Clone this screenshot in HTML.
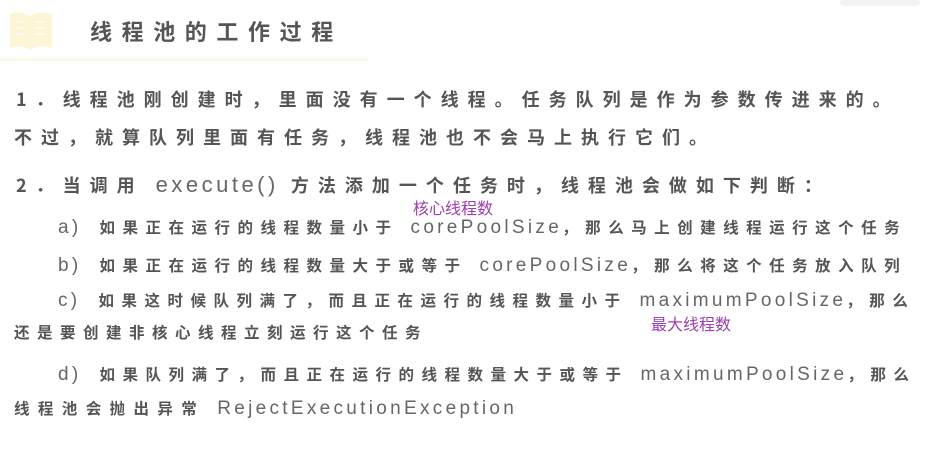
<!DOCTYPE html>
<html><head><meta charset="utf-8"><style>
html,body{margin:0;padding:0;background:#fff;width:931px;height:460px;overflow:hidden;position:relative}
.ln{position:absolute;white-space:nowrap;color:#555;font-family:"Liberation Sans","Noto Sans CJK SC",sans-serif;line-height:1}
.c{font-family:"Noto Sans CJK SC",sans-serif;font-weight:700}
.big .c{font-size:18px;letter-spacing:9px}
.sm .c{font-size:15.5px;letter-spacing:7.5px}
.l{font-family:"Liberation Sans",sans-serif;color:#666;font-size:19px;letter-spacing:3.3px}
.g{display:inline-block;width:18px}
.h{display:inline-block;width:12px}
.p{position:absolute;color:#9b3fb0;font-family:"Noto Sans CJK SC",sans-serif;font-size:16px;line-height:1;white-space:nowrap}
</style></head><body>
<svg style="position:absolute;left:8px;top:10px" width="46" height="42" viewBox="0 0 46 42"><path d="M2 4 Q12 0 22 6 Q32 0 44 4 L44 38 Q32 34 22 40 Q12 34 2 38Z" fill="#fdf6d6"/><path d="M8 12h9M8 18h9M8 24h9M28 12h9M28 18h9M28 24h9" stroke="#fffbea" stroke-width="2"/></svg>
<div class="ln" style="left:90px;top:20px;font-size:22px;color:#555"><span class="c" style="letter-spacing:9.6px">线程池的工作过程</span></div>
<div style="position:absolute;left:0;top:58px;width:368px;height:3px;background:#fdf9ea"></div>
<div style="position:absolute;left:840px;top:0;width:80px;height:6px;background:#f3f3f3;border-radius:3px"></div>
<div class="ln big" style="left:16px;top:90px"><span class="c">1．线程池刚创建时，里面没有一个线程。任务队列是作为参数传进来的。</span></div>
<div class="ln big" style="left:14px;top:128px"><span class="c">不过，就算队列里面有任务，线程池也不会马上执行它们。</span></div>
<div class="ln big" style="left:16px;top:174px"><span class="c">2．当调用</span><span class="h"></span><span class="l" style="font-size:22px;letter-spacing:3.5px">execute()</span><span class="h"></span><span class="c">方法添加一个任务时，线程池会做如下判断：</span></div>
<div class="p" style="left:413px;top:199px">核心线程数</div>
<div class="ln sm" style="left:58px;top:218px"><span class="l">a)</span><span class="g"></span><span class="c">如果正在运行的线程数量小于</span><span class="h"></span><span class="l">corePoolSize</span><span class="c">，那么马上创建线程运行这个任务</span></div>
<div class="ln sm" style="left:58px;top:256px"><span class="l">b)</span><span class="g"></span><span class="c">如果正在运行的线程数量大于或等于</span><span class="h"></span><span class="l">corePoolSize</span><span class="c">，那么将这个任务放入队列</span></div>
<div class="ln sm" style="left:58px;top:291px"><span class="l">c)</span><span class="g"></span><span class="c">如果这时候队列满了，而且正在运行的线程数量小于</span><span class="h"></span><span class="l">maximumPoolSize</span><span class="c">，那么</span></div>
<div class="p" style="left:651px;top:315px">最大线程数</div>
<div class="ln sm" style="left:14px;top:325px"><span class="c">还是要创建非核心线程立刻运行这个任务</span></div>
<div class="ln sm" style="left:58px;top:365px"><span class="l">d)</span><span class="g"></span><span class="c">如果队列满了，而且正在运行的线程数量大于或等于</span><span class="h"></span><span class="l">maximumPoolSize</span><span class="c">，那么</span></div>
<div class="ln sm" style="left:14px;top:399px"><span class="c" style="letter-spacing:8.4px">线程池会抛出异常</span><span class="h"></span><span class="l">RejectExecutionException</span></div>
</body></html>
